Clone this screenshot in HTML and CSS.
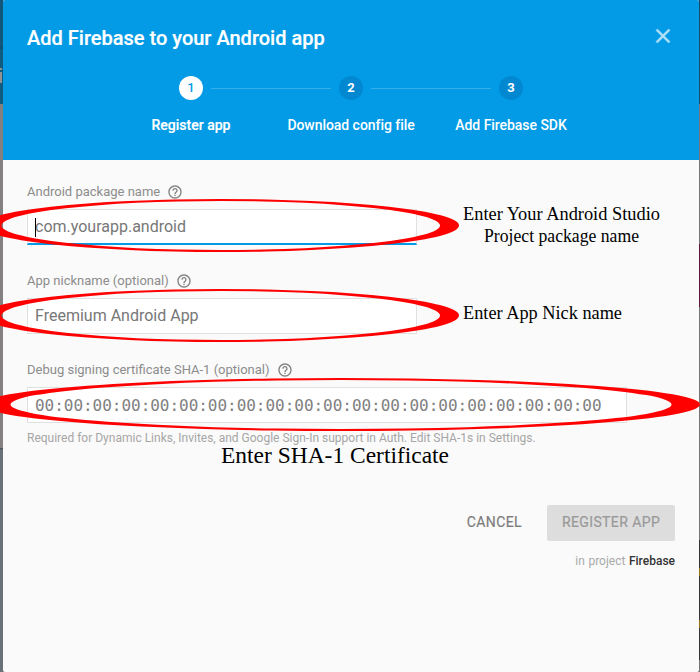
FILE: index.html
```
<!DOCTYPE html>
<html lang="en">
<head>
<meta charset="utf-8">
<title>Add Firebase to your Android app</title>
<link rel="stylesheet" href="styles.css">
</head>
<body>
<svg width="0" height="0" class="defs">
  <symbol id="help" viewBox="0 0 24 24"><path d="M11 18h2v-2h-2v2zm1-16C6.48 2 2 6.48 2 12s4.480 10 10 10 10-4.480 10-10S17.520 2 12 2zm0 18c-4.410 0-8-3.590-8-8s3.590-8 8-8 8 3.590 8 8-3.590 8-8 8zm0-14c-2.210 0-4 1.790-4 4h2c0-1.100.9-2 2-2s2 .9 2 2c0 2-3 1.750-3 5h2c0-2.250 3-2.500 3-5 0-2.210-1.790-4-4-4z"/></symbol>
</svg>
<main class="dialog">
  <header class="head">
    <div class="title-row">
      <h1>Add Firebase to your Android app</h1>
      <svg class="close" viewBox="0 0 24 24"><path d="M19 6.410L17.590 5 12 10.590 6.410 5 5 6.410 10.590 12 5 17.590 6.410 19 12 13.410 17.590 19 19 17.590 13.410 12z"/></svg>
    </div>
    <ol class="steps">
      <li class="active"><b>1</b><span>Register app</span></li>
      <li><b>2</b><span>Download config file</span></li>
      <li><b>3</b><span>Add Firebase SDK</span></li>
    </ol>
  </header>
  <section class="form">
    <div class="field">
      <label><span>Android package name</span><svg><use href="#help"/></svg></label>
      <div class="input focus"><i class="caret"></i><span>com.yourapp.android</span></div>
    </div>
    <div class="field">
      <label><span>App nickname (optional)</span><svg><use href="#help"/></svg></label>
      <div class="input"><span>Freemium Android App</span></div>
    </div>
    <div class="field">
      <label><span>Debug signing certificate SHA-1 (optional)</span><svg><use href="#help"/></svg></label>
      <div class="input wide"><span class="sha">00:00:00:00:00:00:00:00:00:00:00:00:00:00:00:00:00:00:00:00</span></div>
      <p class="hint">Required for Dynamic Links, Invites, and Google Sign-In support in Auth. Edit SHA-1s in Settings.</p>
    </div>
  </section>
  <footer>
    <div class="buttons"><span class="cancel">CANCEL</span><span class="register">REGISTER APP</span></div>
    <p class="project">in project <strong>Firebase</strong></p>
  </footer>
</main>
<div class="edge"><i class="glyph"></i></div>
<div class="edge right"></div>
<svg class="notes" viewBox="0 0 700 672">
  <g fill="#f00" fill-rule="evenodd">
    <path d="M-19 225.500a239 26.500 0 0 1 478 0a239 26.500 0 0 1 -478 0zM1.500 225.500a219.250 24.500 0 0 0 438.500 0a219.250 24.500 0 0 0 -438.500 0z"/>
    <path d="M-19 315.500a239 26.500 0 0 1 478 0a239 26.500 0 0 1 -478 0zM1.500 315.500a219.250 24.500 0 0 0 438.500 0a219.250 24.500 0 0 0 -438.500 0z"/>
    <path d="M-18 404.500a359 26.500 0 0 1 718 0a359 26.500 0 0 1 -718 0zM10.500 404.500a330.500 24.500 0 0 0 661 0a330.500 24.500 0 0 0 -661 0z"/>
  </g>
  <g class="note">
    <text x="463" y="220" textLength="197" lengthAdjust="spacingAndGlyphs">Enter Your Android Studio</text>
    <text x="484" y="242" textLength="155" lengthAdjust="spacingAndGlyphs">Project package name</text>
    <text x="463" y="319" textLength="159" lengthAdjust="spacingAndGlyphs">Enter App Nick name</text>
    <text class="big" x="221" y="463" textLength="228" lengthAdjust="spacingAndGlyphs">Enter SHA-1 Certificate</text>
  </g>
</svg>
</body>
</html>
```
FILE: styles.css
```
* { box-sizing: border-box; }
body { margin: 0; width: 700px; height: 672px; overflow: hidden; position: relative; background: #747474; font-family: Roboto, "Liberation Sans", sans-serif; }
h1, p, ol { margin: 0; padding: 0; }
.defs { position: absolute; }
.dialog { margin: 0 1px 0 3px; height: 672px; background: #fafafa; border-radius: 2px; overflow: hidden; }
.head { height: 160px; background: #039be5; color: #fff; padding: 24px 24px 0; }
.title-row { display: flex; justify-content: space-between; height: 52px; }
h1 { font-size: 20px; line-height: 28px; font-weight: 500; white-space: nowrap; -webkit-text-stroke: .2px #fff; }
.close { width: 24px; height: 24px; fill: #b3e1f7; stroke: #b3e1f7; stroke-width: .5px; }
.steps { display: flex; justify-content: center; list-style: none; }
.steps li { width: 160px; display: flex; flex-direction: column; align-items: center; position: relative; font-size: 14px; font-weight: 500; white-space: nowrap; }
.steps b { width: 24px; height: 24px; border-radius: 50%; background: #0288d1; font-size: 13px; line-height: 24px; text-align: center; font-weight: 700; }
.steps .active b { background: #fff; color: #039be5; font-weight: 500; }
.steps span { margin-top: 15px; line-height: 20px; letter-spacing: -.05px; }
.steps .active span { -webkit-text-stroke: .2px #fff; letter-spacing: 0; }
.steps li:not(:last-child)::after { content: ""; position: absolute; left: 100px; top: 12px; width: 120px; height: 1px; background: #35afea; }
.form { padding: 22px 24px 0; }
.field { height: 89px; }
label { display: flex; align-items: center; height: 20px; font-size: 13px; color: #8c8c8c; white-space: nowrap; }
label span { margin-bottom: 2px; }
label svg { width: 16px; height: 16px; margin-left: 7px; fill: #808080; }
.input { display: flex; align-items: center; margin-top: 7px; width: 390px; height: 36px; padding: 0 7px; border: 1px solid #e0e0e0; background: #fff; color: #777; font-size: 16px; line-height: 20px; padding-bottom: 1px; white-space: nowrap; position: relative; }
.input.focus { border-bottom: 2px solid #039be5; padding-bottom: 0; }
.input.wide { width: 600px; padding-bottom: 0; padding-top: 1px; }
.caret { position: absolute; left: 7px; top: 8px; width: 1px; height: 19px; background: #000; }
.sha { font-family: "DejaVu Sans Mono", "Liberation Mono", monospace; font-size: 16px; letter-spacing: -.03px; color: #808080; }
.hint { margin-top: 6px; font-size: 12px; line-height: 18px; color: #a6a6a6; white-space: nowrap; }
footer { padding: 56px 24px 0; display: flex; flex-direction: column; align-items: flex-end; }
.buttons { display: flex; font-size: 14px; font-weight: 400; letter-spacing: .4px; line-height: 35px; -webkit-text-stroke: .2px; }
.cancel { color: #7c7c7c; margin-right: 25px; }
.register { width: 128px; height: 36px; text-align: center; color: #999; background: #ddd; border-radius: 2px; }
.project { margin-top: 11px; font-size: 12px; line-height: 18px; color: #aaa; word-spacing: .6px; }
.project strong { font-weight: 500; color: #333; }
.edge { position: absolute; left: 0; top: 0; width: 3px; height: 672px; background: linear-gradient(#105779 0 47px, #0c4867 48px, #105c80 49px 104px, #858080 104px 448px, #50565a 448px 449px, #697176 450px); }
.edge.right { left: 699px; width: 1px; background: linear-gradient(#17496a 0 104px, #777 104px 244px, #601538 244px 307px, #777 307px 540px, #333 540px 568px, #987313 568px 576px, #333 576px 620px, #987313 620px 628px, #333 628px 660px, #777 660px); }
.glyph { position: absolute; left: 0; top: 68px; width: 2px; height: 15px; background: linear-gradient(#8f9292 0 2px, #105c80 2px 4px, #8f9292 4px); }
.notes { position: absolute; left: 0; top: 0; width: 700px; height: 672px; }
.note { font-family: "Liberation Serif", serif; font-size: 18px; fill: #000; }
.big { font-size: 23px; }
```
